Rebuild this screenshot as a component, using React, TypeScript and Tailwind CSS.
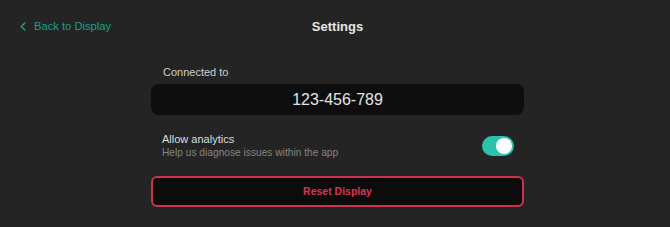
import React, { useState } from 'react';

function Toggle({ on, onChange }: { on: boolean; onChange: () => void }) {
    return (
        <button
            type="button"
            onClick={onChange}
            className={`relative w-[32px] h-[20px] rounded-full shrink-0 ${on ? 'bg-[#2bc2ad]' : 'bg-[#555]'}`}
        >
            <span
                className={`absolute top-[2px] w-[16px] h-[16px] rounded-full bg-white ${on ? 'left-[14px]' : 'left-[2px]'}`}
            />
        </button>
    );
}

export default function App() {
    const [analytics, setAnalytics] = useState(true);

    return (
        <div className="min-h-[227px] bg-[#242424] font-['Liberation_Sans',Arial,sans-serif]">
            <div className="h-[50px] grid grid-cols-[1fr_auto_1fr] items-center pl-[5px] pt-[3px]">
                <a href="#" className="flex items-center gap-[8px] ml-[15px] text-[#1c9f8f] text-[11.2px] justify-self-start">
                    <svg width="6" height="9" viewBox="0 0 6 9" fill="none">
                        <path d="M4.8 1 L1.3 4.5 L4.8 8" stroke="currentColor" strokeWidth="1.5" strokeLinecap="round" strokeLinejoin="round" />
                    </svg>
                    Back to Display
                </a>
                <h1 className="text-[13px] font-bold text-[#e6e6e6]">Settings</h1>
                <div />
            </div>

            <div className="w-[373px] ml-[151px] pt-[16px]">
                <div className="pl-3 text-[11px] leading-[13px] text-[#cfcfcf] mb-[5px]">Connected to</div>
                <div className="h-[31px] rounded-lg bg-[#0e0e0e] flex items-center justify-center text-[16px] text-[#e4e4e4]">
                    123-456-789
                </div>

                <div className="mt-[17px] pl-[11px] pr-[10px] flex items-center justify-between">
                    <div>
                        <div className="text-[11px] leading-[14px] text-[#dcdcdc]">Allow analytics</div>
                        <div className="text-[10.2px] leading-[13px] text-[#858585]">Help us diagnose issues within the app</div>
                    </div>
                    <Toggle on={analytics} onChange={() => setAnalytics(!analytics)} />
                </div>

                <button
                    type="button"
                    className="mt-[17px] w-full h-[31px] rounded-md border-2 border-[#d0324d] bg-[#0c0c0c] text-[#d8344f] text-[10.5px] font-bold"
                >
                    Reset Display
                </button>
            </div>
        </div>
    );
}
